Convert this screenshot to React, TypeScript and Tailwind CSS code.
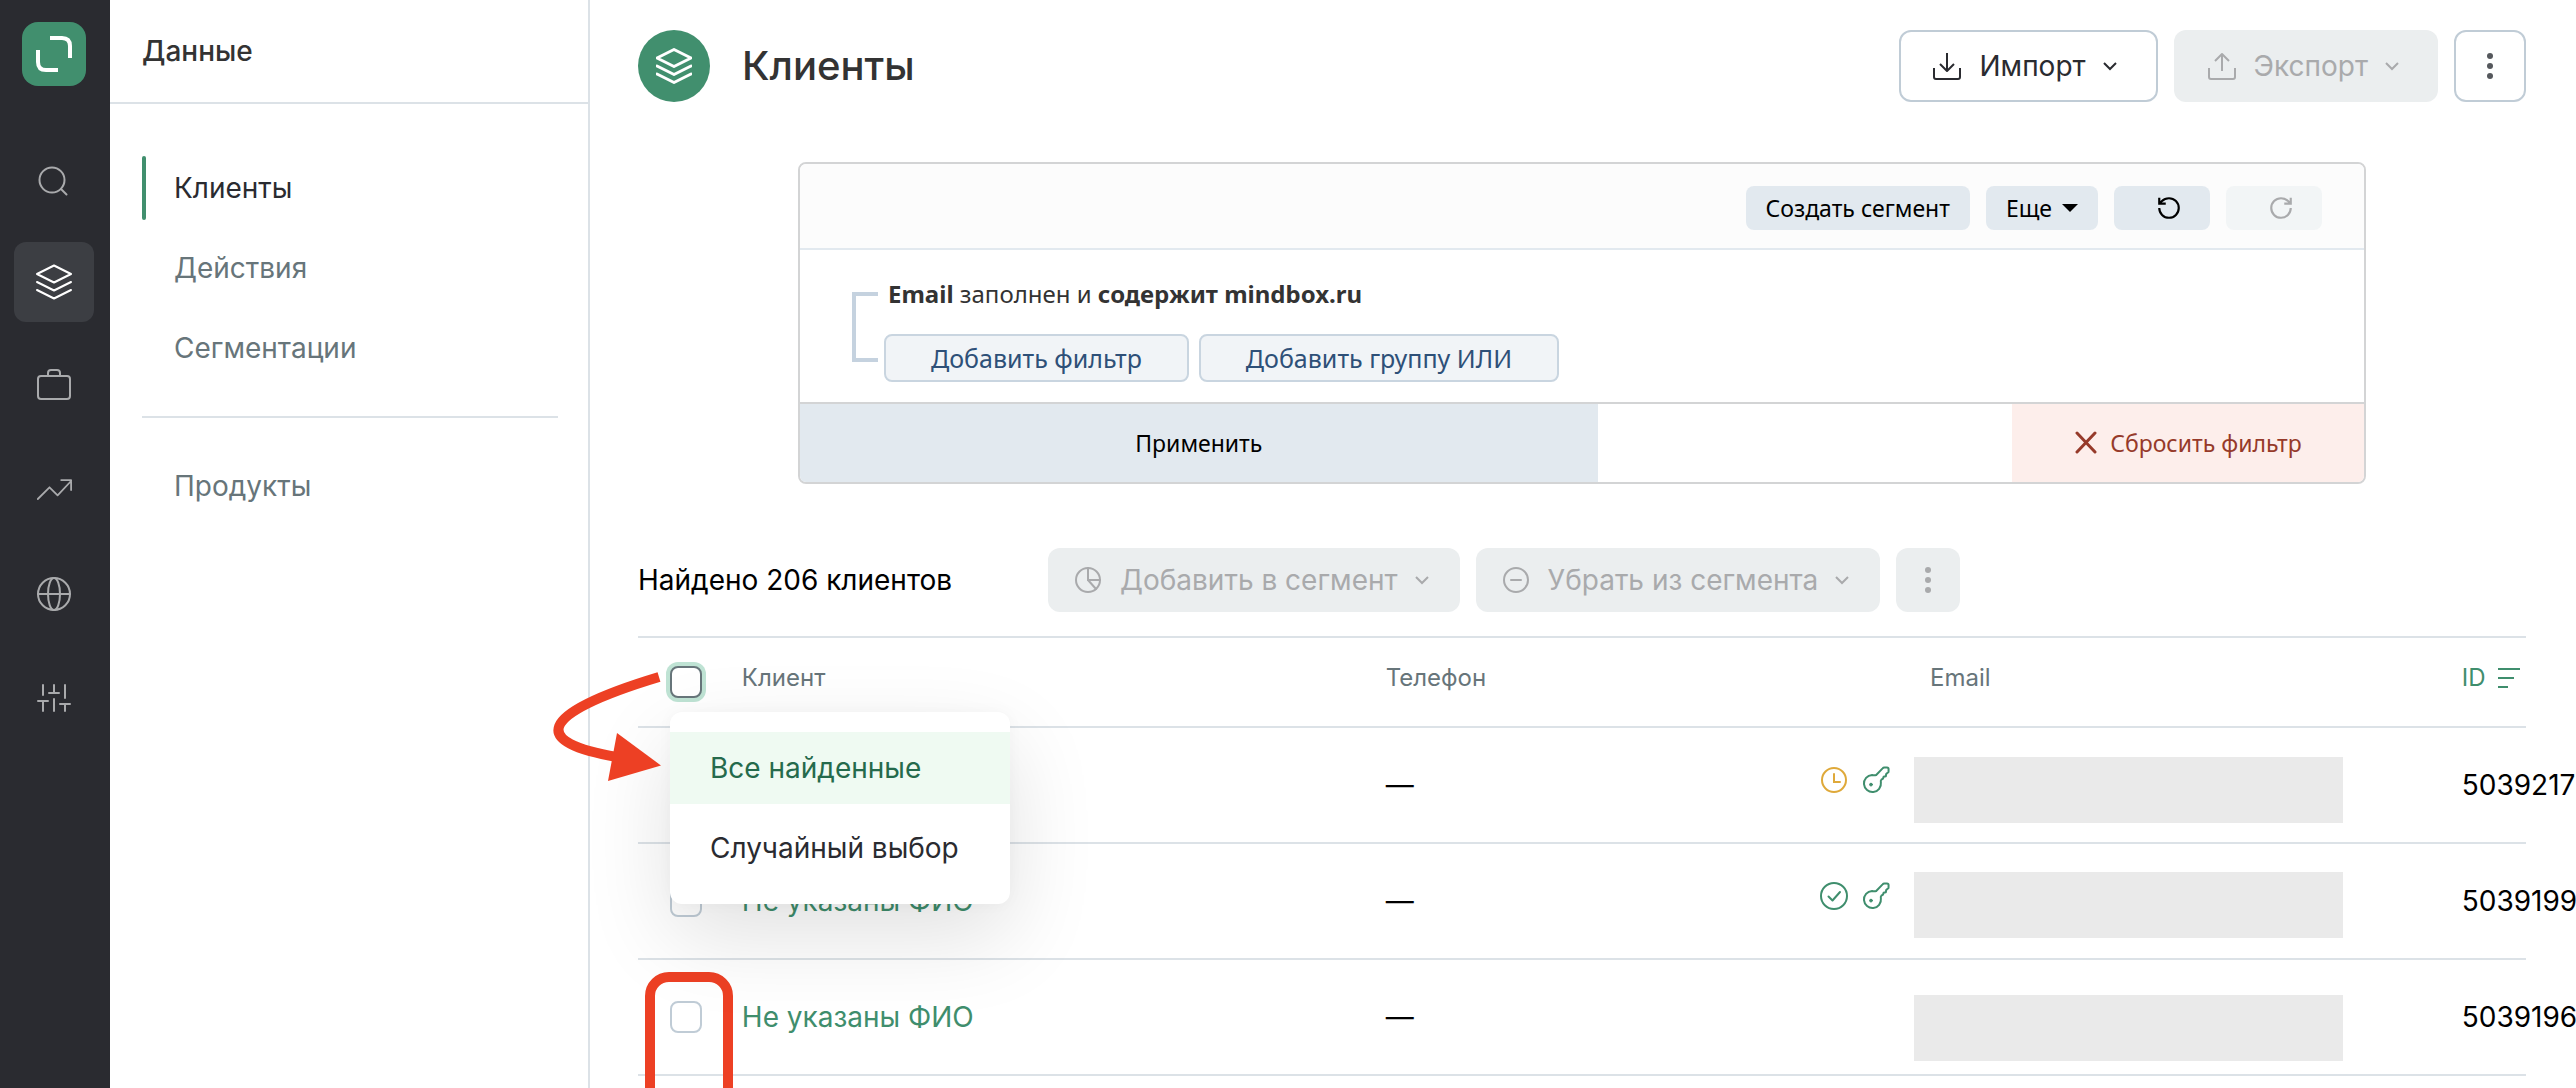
import type { ReactNode } from "react";

type IconProps = { className?: string; children: ReactNode; box?: number; sw?: number };

function Icon({ className = "size-9", children, box = 36, sw = 2 }: IconProps) {
  return (
    <svg
      viewBox={`0 0 ${box} ${box}`}
      className={`${className} shrink-0`}
      fill="none"
      stroke="currentColor"
      strokeWidth={sw}
      strokeLinecap="round"
      strokeLinejoin="round"
      aria-hidden="true"
    >
      {children}
    </svg>
  );
}

const Layers = ({ className, sw }: { className?: string; sw?: number }) => (
  <Icon className={className} sw={sw}>
    <path d="M18 1.500 35 10 18 18.500 1 10Z" />
    <path d="M1 18l17 8.500L35 18" />
    <path d="M1 26l17 8.500L35 26" />
  </Icon>
);

const Chevron = () => (
  <Icon className="h-4 w-4" box={16}>
    <path d="M2 5l6 6 6-6" strokeLinecap="butt" strokeLinejoin="miter" />
  </Icon>
);

const Dots = () => (
  <svg viewBox="0 0 8 28" className="h-7 w-2" fill="currentColor" aria-hidden="true">
    <circle cx="4" cy="4" r="3" />
    <circle cx="4" cy="14" r="3" />
    <circle cx="4" cy="24" r="3" />
  </svg>
);

const KeyIcon = () => (
  <Icon className="size-7 text-[#3f8e6d]" box={28}>
    <path d="M14.200 9 20.600 2.400Q21.300 1.600 22.300 1.600L25 1.600Q26.600 1.600 26.600 3.200L26.500 6 24.200 8 23.800 10.200 21.600 10.800 21 12.600 19.400 13.600Q18.400 14.600 18.900 16.400A8.500 8.500 0 1 1 10 9Q12.400 9.600 14.200 9Z" />
    <circle cx="9" cy="18.600" r="1.400" fill="currentColor" strokeWidth="1" />
  </Icon>
);

const ClockIcon = () => (
  <Icon className="size-7 text-[#dfa93a]" box={28}>
    <circle cx="14" cy="14" r="12" />
    <path d="M14 8v8h6" strokeLinejoin="miter" />
  </Icon>
);

const CheckIcon = () => (
  <Icon className="size-7 text-[#3f8e6d]" box={28}>
    <circle cx="14" cy="14" r="13" />
    <path d="M8.500 14.500 12.500 18.500 20 10" />
  </Icon>
);

const railItems = [
  {
    label: "Поиск",
    icon: (
      <Icon>
        <circle cx="16" cy="20" r="12.500" />
        <path d="M25 29l5.500 5.500" />
      </Icon>
    ),
  },
  { label: "Данные", active: true, icon: <Layers /> },
  {
    label: "Кампании",
    icon: (
      <Icon>
        <rect x="2" y="8" width="32" height="23" rx="3" />
        <path d="M12 8V5q0-3 3-3h6q3 0 3 3v3" />
      </Icon>
    ),
  },
  {
    label: "Отчёты",
    icon: (
      <Icon className="h-9 w-10" box={40}>
        <path d="M2 30 15 17l9 9L39 10M28 9h11v11" />
      </Icon>
    ),
  },
  {
    label: "Сайты",
    icon: (
      <Icon>
        <circle cx="18" cy="18" r="16" />
        <ellipse cx="18" cy="18" rx="6" ry="16" />
        <path d="M2 18h32" />
      </Icon>
    ),
  },
  {
    label: "Настройки",
    icon: (
      <Icon>
        <path d="M7 5v10M7 21v10M2 21h10M18 5v8M13 13h10M18 19v12M29 5v13M29 24v7M24 24h10" />
      </Icon>
    ),
  },
];

function Rail() {
  return (
    <aside className="flex w-[110px] shrink-0 flex-col bg-[#2a2b30] pl-[14px]">
      <a href="#home" aria-label="Главная" className="mt-[22px] ml-2 flex size-16 items-center justify-center rounded-2xl bg-[#418f6e]">
        <svg viewBox="0 0 36 36" className="size-9" fill="none" stroke="#fff" strokeWidth="4" aria-hidden="true">
          <path d="M14 2h12q8 0 8 8v12" />
          <path d="M2 14v12q0 8 8 8h12" />
        </svg>
      </a>
      <nav className="mt-[52px] flex flex-col gap-6">
        {railItems.map((item) => (
          <a
            key={item.label}
            href="#section"
            aria-label={item.label}
            className={
              item.active
                ? "flex size-20 items-center justify-center rounded-xl bg-[#3c3e43] text-white"
                : "flex size-20 items-center justify-center rounded-xl text-[#a9aaac]"
            }
          >
            {item.icon}
          </a>
        ))}
      </nav>
    </aside>
  );
}

function SideLink({ children, active = false }: { children: ReactNode; active?: boolean }) {
  return (
    <a
      href="#list"
      className={
        active
          ? "flex h-16 items-center gap-7 text-[#2a2b30]"
          : "flex h-16 items-center gap-7 text-[#67757a]"
      }
    >
      <span className={active ? "h-full w-1 rounded-sm bg-[#418f6e]" : "h-full w-1"} />
      {children}
    </a>
  );
}

function SidePanel() {
  return (
    <aside className="w-[480px] shrink-0 border-r-2 border-[#dce2e7] text-[28px]">
      <h2 className="flex h-[104px] items-center border-b-2 border-[#dce2e7] pl-8 font-medium text-[#333]">Данные</h2>
      <nav className="mt-[52px] mr-[30px] ml-8 flex flex-col gap-4">
        <SideLink active>Клиенты</SideLink>
        <SideLink>Действия</SideLink>
        <SideLink>Сегментации</SideLink>
        <hr className="my-5 border-t-2 border-[#dce2e7]" />
        <SideLink>Продукты</SideLink>
      </nav>
    </aside>
  );
}

function PageHeader() {
  return (
    <header className="flex items-center">
      <span className="flex size-[72px] items-center justify-center rounded-full bg-[#418f6e] text-white">
        <Layers sw={3} />
      </span>
      <h1 className="ml-8 text-[40px] leading-[48px] font-medium text-[#333]">Клиенты</h1>
      <div className="ml-auto flex gap-4 text-[28px]">
        <button className="flex h-[72px] items-center rounded-xl border-2 border-[#c0ccd6] pr-[38px] pl-[30px] text-[#2a2b30]">
          <Icon className="size-8" box={32}>
            <path d="M3 18v9q0 2 2 2h22q2 0 2-2v-9M16 3v17M9 14l7 7 7-7" strokeLinecap="butt" />
          </Icon>
          <span className="mx-4">Импорт</span>
          <Chevron />
        </button>
        <button disabled className="flex h-[72px] items-center rounded-xl bg-[#ebeeef] pr-[38px] pl-8 text-[#a9aaac]">
          <Icon className="size-8" box={32}>
            <path d="M3 18v9q0 2 2 2h22q2 0 2-2v-9M16 21V4M9 11l7-7 7 7" strokeLinecap="butt" />
          </Icon>
          <span className="mx-4">Экспорт</span>
          <Chevron />
        </button>
        <button aria-label="Ещё" className="flex size-[72px] items-center justify-center rounded-xl border-2 border-[#c0ccd6] text-[#55585c]">
          <Dots />
        </button>
      </div>
    </header>
  );
}

function FilterPanel() {
  return (
    <section className="mx-auto mt-[60px] w-full max-w-[1568px] overflow-hidden rounded-lg border-2 border-[#d3d4d5] font-['Noto_Sans',sans-serif] text-[23px] leading-8">
      <div className="flex h-[86px] items-center justify-end gap-4 border-b-2 border-[#e2e9ef] bg-[#fcfcfc] pt-1 pr-[42px] text-black">
        <button className="h-11 rounded-lg bg-[#e2e9ef] px-5">Создать сегмент</button>
        <button className="flex h-11 items-center gap-[10px] rounded-lg bg-[#e2e9ef] px-5">
          Еще
          <svg viewBox="0 0 16 8" className="h-2 w-4" aria-hidden="true">
            <path d="M0 0h16L8 8Z" fill="currentColor" />
          </svg>
        </button>
        <button aria-label="Отменить" className="flex h-11 w-24 items-center justify-center rounded-lg bg-[#e2e9ef] pl-[14px]">
          <Icon className="size-[26px]" box={24}>
            <path d="M3 12a9 9 0 1 0 9-9 9.750 9.750 0 0 0-6.740 2.740L3 8M3 2.500V8h6" strokeLinejoin="miter" strokeLinecap="butt" />
          </Icon>
        </button>
        <button aria-label="Повторить" disabled className="flex h-11 w-24 items-center justify-center rounded-lg bg-[#f2f5f6] pl-[14px] text-[#a9aaac]">
          <Icon className="size-[26px]" box={24}>
            <path d="M21 12a9 9 0 1 1-9-9 9.750 9.750 0 0 1 6.740 2.740L21 8M21 2.500V8h-6" strokeLinejoin="miter" strokeLinecap="butt" />
          </Icon>
        </button>
      </div>
      <div className="flex h-[152px] gap-[6px] pt-7 pl-[52px]">
        <div className="mt-[14px] h-[70px] w-[26px] border-4 border-r-0 border-[#c5d2df]" />
        <div>
          <p className="pl-1 text-[24px] text-[#333]">
            <b>Email</b> заполнен и <b>содержит mindbox.ru</b>
          </p>
          <div className="mt-6 flex gap-[10px] text-[25px] text-[#2e5078]">
            <button className="flex h-12 items-center rounded-lg border-2 border-[#c9d5e0] bg-[#f1f4f7] px-[45px]">Добавить фильтр</button>
            <button className="flex h-12 items-center rounded-lg border-2 border-[#c9d5e0] bg-[#f1f4f7] px-[45px]">Добавить группу ИЛИ</button>
          </div>
        </div>
      </div>
      <div className="flex h-20 justify-between border-t-2 border-[#d3d4d5]">
        <button className="w-[51%] bg-[#e2e9ef] text-black">Применить</button>
        <button className="flex w-[352px] items-center justify-center gap-3 bg-[#fdeeeb] text-[#963a2a]">
          <Icon className="size-6" box={24} sw={3}>
            <path d="M3 2l18 19M21 2 3 21" />
          </Icon>
          Сбросить фильтр
        </button>
      </div>
    </section>
  );
}

function BulkButton({ icon, children }: { icon: ReactNode; children: ReactNode }) {
  return (
    <button disabled className="flex h-16 items-center gap-4 rounded-xl bg-[#ebeeef] pr-[30px] pl-6 text-[#a9aaac]">
      {icon}
      <span>{children}</span>
      <Chevron />
    </button>
  );
}

function ResultsBar() {
  return (
    <div className="mt-16 flex items-center gap-4 text-[28px]">
      <p className="w-[394px] text-black">Найдено 206 клиентов</p>
      <BulkButton
        icon={
          <Icon className="size-8" box={32}>
            <circle cx="16" cy="16" r="12" />
            <path d="M16 4v12h12M16 16l8 9" strokeLinejoin="miter" />
          </Icon>
        }
      >
        Добавить в сегмент
      </BulkButton>
      <BulkButton
        icon={
          <Icon className="size-8" box={32}>
            <circle cx="16" cy="16" r="12" />
            <path d="M11 16h10" />
          </Icon>
        }
      >
        Убрать из сегмента
      </BulkButton>
      <button disabled aria-label="Другие действия" className="flex size-16 items-center justify-center rounded-xl bg-[#ebeeef] text-[#a9aaac]">
        <Dots />
      </button>
    </div>
  );
}

function SelectMenu() {
  return (
    <div
      role="menu"
      className="absolute top-[74px] left-8 z-10 flex w-[340px] flex-col gap-2 rounded-xl bg-white py-5 text-[28px] shadow-[0_32px_88px_rgba(0,0,0,0.12),0_0_16px_rgba(0,0,0,0.03)]"
    >
      <button role="menuitem" className="h-[72px] bg-[#effaf2] pl-10 text-left text-[#256a4c]">
        Все найденные
      </button>
      <button role="menuitem" className="h-[72px] pl-10 text-left text-[#2a2b30]">
        Случайный выбор
      </button>
    </div>
  );
}

function ArrowMark() {
  return (
    <svg viewBox="0 0 112 112" className="absolute top-8 left-[-88px] z-20 size-28" fill="none" aria-hidden="true">
      <path d="M109 7C-17 45-17 73 67 87" stroke="#ed4024" strokeWidth="10" />
      <path d="M67 63 111 95.500 58 111Z" fill="#ed4024" />
    </svg>
  );
}

const rows = [
  { name: "", id: "5039217", icons: <><ClockIcon /><KeyIcon /></>, mask: "mt-[29px]" },
  { name: "Не указаны ФИО", id: "5039199", icons: <><CheckIcon /><KeyIcon /></>, mask: "mt-7" },
  { name: "Не указаны ФИО", id: "5039196", icons: null, mask: "mt-[35px]", marked: true },
];

function ClientsTable() {
  return (
    <table className="mt-6 w-full table-fixed border-separate border-spacing-0 border-t-2 border-[#dce2e7] text-left text-[28px]">
      <colgroup>
        <col className="w-[5.5%]" />
        <col className="w-[34.1%]" />
        <col className="w-[22.8%]" />
        <col className="w-[34.2%]" />
        <col />
      </colgroup>
      <thead>
        <tr className="text-[24px] leading-8 text-[#67757a] [&>th]:h-[90px] [&>th]:border-b-2 [&>th]:border-[#dce2e7] [&>th]:align-top [&>th]:font-normal">
          <th className="relative pt-7 pl-8">
            <input
              type="checkbox"
              aria-label="Выбрать всех"
              className="block size-8 appearance-none rounded-lg border-2 border-[#67757a] bg-white ring-4 ring-[#bfe3d4]"
            />
            <SelectMenu />
            <ArrowMark />
          </th>
          <th className="pt-6">Клиент</th>
          <th className="pt-6">Телефон</th>
          <th className="pt-6 pl-[114px]">Email</th>
          <th className="pt-6">
            <button className="flex items-center gap-3 text-[#3f8e6d]">
              ID
              <svg viewBox="0 0 22 20" className="h-5 w-[22px]" stroke="currentColor" strokeWidth="2" aria-hidden="true">
                <path d="M0 1h22M0 10h16M0 19h10" />
              </svg>
            </button>
          </th>
        </tr>
      </thead>
      <tbody>
        {rows.map((row) => (
          <tr key={row.id} className="[&>td]:h-[116px] [&>td]:border-b-2 [&>td]:border-[#dce2e7]">
            <td className="relative pl-8">
              <input
                type="checkbox"
                aria-label={`Выбрать клиента ${row.id}`}
                className="block size-8 appearance-none rounded-lg border-2 border-[#c0ccd6]"
              />
              {row.marked && (
                <span className="absolute top-3 left-[7px] h-40 w-[88px] rounded-3xl border-[10px] border-[#ed4024]" />
              )}
            </td>
            <td>
              {row.name && (
                <a href="#client" className="text-[#3f8e6d]">
                  {row.name}
                </a>
              )}
            </td>
            <td className="text-black">—</td>
            <td className="align-top">
              <div className="flex items-start">
                <span className="mt-[38px] flex w-[98px] gap-[14px] pl-1">{row.icons}</span>
                <span className={`h-[66px] w-[429px] bg-[#eaeaea] ${row.mask}`} />
              </div>
            </td>
            <td className="whitespace-nowrap text-black">{row.id}</td>
          </tr>
        ))}
      </tbody>
    </table>
  );
}

export default function App() {
  return (
    <div className="flex h-screen overflow-hidden bg-white font-[Inter,sans-serif]">
      <Rail />
      <SidePanel />
      <main className="min-w-0 flex-1 pt-[30px] pr-[50px] pl-12">
        <PageHeader />
        <FilterPanel />
        <ResultsBar />
        <ClientsTable />
      </main>
    </div>
  );
}
